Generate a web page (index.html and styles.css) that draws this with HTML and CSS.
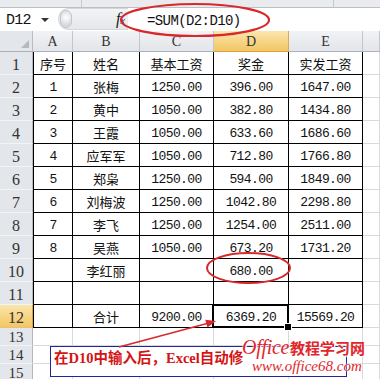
FILE: index.html
```html
<!DOCTYPE html>
<html lang="zh-CN">
<head>
<meta charset="utf-8">
<title>Excel</title>
<link rel="stylesheet" href="styles.css">
</head>
<body>
<div class="app">
  <div class="topstrip"><span class="ts-a"></span><span class="ts-b"></span></div>
  <div class="fbar">
    <div class="namebox"><span class="nb-text">D12</span><span class="nb-arrow"></span></div>
    <div class="knobarea"><span class="knob"></span><span class="fx">f<span class="fxx">x</span></span></div>
    <div class="formula">=SUM(D2:D10)</div>
  </div>
  <div class="gap"></div>
  <div class="sheet">
    <div class="corner"></div><div class="ch">A</div><div class="ch">B</div><div class="ch">C</div><div class="ch hl">D</div><div class="ch">E</div><div class="ch"></div>

    <div class="rh">1</div><div class="c t a z">序号</div><div class="c t z">姓名</div><div class="c t z">基本工资</div><div class="c t z">奖金</div><div class="c t z">实发工资</div><div class="c"></div>
    <div class="rh">2</div><div class="c t a n">1</div><div class="c t z">张梅</div><div class="c t n">1250.00</div><div class="c t n">396.00</div><div class="c t n">1647.00</div><div class="c"></div>
    <div class="rh">3</div><div class="c t a n">2</div><div class="c t z">黄中</div><div class="c t n">1050.00</div><div class="c t n">382.80</div><div class="c t n">1434.80</div><div class="c"></div>
    <div class="rh">4</div><div class="c t a n">3</div><div class="c t z">王霞</div><div class="c t n">1050.00</div><div class="c t n">633.60</div><div class="c t n">1686.60</div><div class="c"></div>
    <div class="rh">5</div><div class="c t a n">4</div><div class="c t z">应军军</div><div class="c t n">1050.00</div><div class="c t n">712.80</div><div class="c t n">1766.80</div><div class="c"></div>
    <div class="rh">6</div><div class="c t a n">5</div><div class="c t z">郑枭</div><div class="c t n">1250.00</div><div class="c t n">594.00</div><div class="c t n">1849.00</div><div class="c"></div>
    <div class="rh">7</div><div class="c t a n">6</div><div class="c t z">刘梅波</div><div class="c t n">1250.00</div><div class="c t n">1042.80</div><div class="c t n">2298.80</div><div class="c"></div>
    <div class="rh">8</div><div class="c t a n">7</div><div class="c t z">李飞</div><div class="c t n">1250.00</div><div class="c t n">1254.00</div><div class="c t n">2511.00</div><div class="c"></div>
    <div class="rh">9</div><div class="c t a n">8</div><div class="c t z">吴燕</div><div class="c t n">1050.00</div><div class="c t n">673.20</div><div class="c t n">1731.20</div><div class="c"></div>
    <div class="rh">10</div><div class="c t a"></div><div class="c t z">李红丽</div><div class="c t"></div><div class="c t n">680.00</div><div class="c t"></div><div class="c"></div>
    <div class="rh">11</div><div class="c t a"></div><div class="c t"></div><div class="c t"></div><div class="c t"></div><div class="c t"></div><div class="c"></div>
    <div class="rh hl">12</div><div class="c t a"></div><div class="c t z">合计</div><div class="c t n">9200.00</div><div class="c t n sel">6369.20</div><div class="c t n">15569.20</div><div class="c"></div>
    <div class="rh s">13</div><div class="c"></div><div class="c"></div><div class="c"></div><div class="c"></div><div class="c"></div><div class="c"></div>
    <div class="rh s">14</div><div class="c"></div><div class="c"></div><div class="c"></div><div class="c"></div><div class="c"></div><div class="c"></div>
    <div class="rh s">15</div><div class="c"></div><div class="c"></div><div class="c"></div><div class="c"></div><div class="c"></div><div class="c"></div>
  </div>

  <div class="note">在D10中输入后，Excel自动修</div>

  <svg class="marks" width="380" height="379" viewBox="0 0 380 379">
    <ellipse cx="195" cy="20" rx="74" ry="16" fill="none" stroke="#d8282c" stroke-width="2.2"/>
    <ellipse cx="248.5" cy="268" rx="41.5" ry="15" fill="none" stroke="#d8282c" stroke-width="2"/>
    <line x1="119" y1="347" x2="207" y2="323.5" stroke="#d8282c" stroke-width="1.6"/>
    <polygon points="216,321 207.4,327.5 205.3,319.7" fill="#d8282c"/>
  </svg>

  <div class="wm">
    <div class="wm1"><span class="wm-o">Office</span><span class="wm-z">教程学习网</span></div>
    <div class="wm2">www.office68.com</div>
  </div>
</div>
</body>
</html>
```
FILE: styles.css
```css
* { box-sizing: border-box; margin: 0; padding: 0; }
html, body { width: 380px; height: 379px; overflow: hidden; background: #fff; }
.app { position: relative; width: 380px; height: 379px; overflow: hidden; background: #fff; }

.topstrip { height: 8px; background: #e9ebee; border-bottom: 1px solid #bcc0c6; display: flex; }
.ts-a { width: 82px; border-right: 1px solid #c5c9ce; }
.ts-b { width: 252px; border-right: 1px solid #c5c9ce; }

.fbar { height: 22px; display: flex; background: #fff; }
.namebox { width: 58px; display: flex; align-items: center; padding-left: 6px; padding-top: 2px; }
.nb-text { font-family: "Liberation Mono", monospace; font-size: 15px; letter-spacing: -0.7px; color: #111; }
.nb-arrow { margin-left: 10px; width: 0; height: 0; border-left: 4px solid transparent; border-right: 4px solid transparent; border-top: 4px solid #333; }
.knobarea { width: 70px; display: flex; align-items: center; background: linear-gradient(#f3f4f6, #e5e7ea); border-radius: 11px 0 0 11px; border: 1px solid #d3d6da; border-right: none; }
.knob { width: 12px; height: 18px; margin-left: 1px; border-radius: 7px; background: radial-gradient(circle at 50% 40%, #ffffff, #d6d9dd 70%); border: 1px solid #c3c7cc; }
.fx { margin-left: auto; margin-right: 3px; font-family: "Liberation Serif", serif; font-style: italic; font-size: 16px; color: #222; }
.fxx { font-size: 10px; }
.formula { flex: 1; display: flex; align-items: center; padding-left: 19px; padding-top: 4px; font-family: "Liberation Mono", monospace; font-size: 14px; letter-spacing: -0.6px; color: #111; }
.gap { height: 1px; }

.sheet { display: grid; grid-template-columns: 33px 40px 67px 74px 75px 74px 1fr; grid-template-rows: 21px repeat(12, 23px) repeat(3, 18px); }

.corner { position: relative; background: #e3e6ea; border-right: 1px solid #b9bdc3; border-bottom: 1px solid #aeb2b8; }
.corner::after { content: ""; position: absolute; right: 3px; bottom: 3px; width: 0; height: 0; border-left: 8px solid transparent; border-bottom: 8px solid #b5b9bf; }

.ch { display: flex; align-items: center; justify-content: center; background: linear-gradient(#f1f3f5, #e2e5e9); border-right: 1px solid #c2c6cc; border-bottom: 1px solid #aeb2b8; font-family: "Liberation Serif", serif; font-size: 14px; color: #333; padding-top: 1px; }
.rh { display: flex; align-items: center; justify-content: center; background: #e3e6ea; border-right: 1px solid #b4b8be; border-bottom: 1px solid #f2f3f5; font-family: "Liberation Serif", serif; font-size: 16px; color: #333; padding-top: 3px; }
.rh.s { padding-top: 0; line-height: 16px; font-size: 15px; }
.ch.hl { background: linear-gradient(#fae6ac, #f3c663); border-bottom-color: #e0a13e; border-right-color: #d6aa5e; }
.rh.hl { background: linear-gradient(#fae6ac, #f3c663); border-right-color: #e0a13e; border-bottom-color: #e6c27c; }

.c { display: flex; align-items: center; justify-content: center; border-right: 1px solid #d7dadd; border-bottom: 1px solid #d7dadd; color: #111; }
.c.t { border-right-color: #000; border-bottom-color: #000; }
.c.a { border-left: 1px solid #000; }
.n { font-family: "Liberation Mono", monospace; font-size: 13px; letter-spacing: -0.6px; padding-top: 2px; }
.z { font-family: "Noto Sans CJK SC", sans-serif; font-size: 13px; }

.sel { position: relative; }
.sel::before { content: ""; position: absolute; left: -2px; top: -1px; right: -1px; bottom: -1px; border: 2px solid #000; }
.sel::after { content: ""; position: absolute; right: -4px; bottom: -4px; width: 6px; height: 6px; background: #000; border: 1px solid #fff; }

.note { position: absolute; left: 50px; top: 346px; width: 297px; height: 31px; border: 1px solid #24249c; background: #fff; padding: 1px 0 0 3px; font-family: "Liberation Serif", "Noto Sans CJK SC", serif; font-weight: bold; font-size: 14.5px; line-height: 20px; color: #d41414; white-space: nowrap; overflow: hidden; }

.marks { position: absolute; left: 0; top: 0; pointer-events: none; }

.wm { position: absolute; left: 242px; top: 336px; color: #e2262b; }
.wm1 { display: flex; align-items: baseline; white-space: nowrap; line-height: 22px; height: 22px; text-shadow: 0 0 2px #fff, 0 0 2px #fff, 1px 1px 1px #fff; }
.wm-o { font-family: "Liberation Serif", serif; font-style: italic; font-size: 20px; letter-spacing: -0.3px; }
.wm-z { font-family: "Noto Sans CJK SC", sans-serif; font-weight: bold; font-size: 15px; margin-left: 1px; }
.wm2 { margin-left: 10px; font-family: "Liberation Serif", serif; font-style: italic; font-size: 15px; line-height: 16px; height: 16px; text-shadow: 0 0 2px #fff, 0 0 2px #fff; white-space: nowrap; }
```
